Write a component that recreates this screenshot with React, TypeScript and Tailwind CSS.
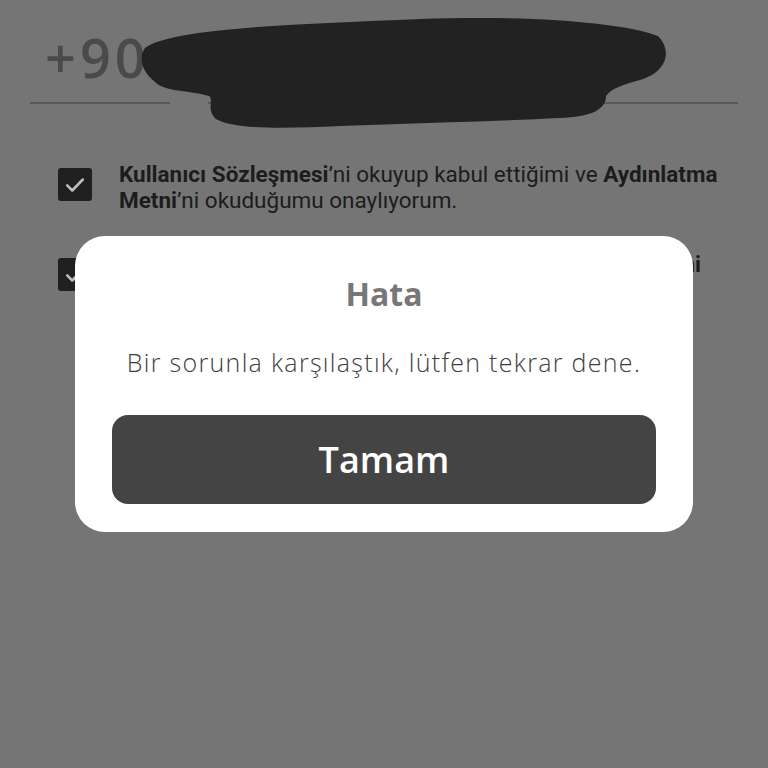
import React from 'react'

function Checkbox() {
  return (
    <div className="w-[34px] h-[33px] shrink-0 rounded-[3px] bg-[#202020] flex items-center justify-center">
      <svg width="22" height="22" viewBox="0 0 24 24" fill="none">
        <path d="M3.5 12.5l5.5 5.5L20.5 6" stroke="#bdbdbd" strokeWidth="2.8" strokeLinecap="round" strokeLinejoin="round" />
      </svg>
    </div>
  )
}

export default function App() {
  return (
    <div className="relative w-[768px] h-[768px] overflow-hidden bg-[#757575] font-['Roboto',sans-serif]">
      {/* Telefon alanı */}
      <div className="relative pt-[26px] px-[30px]">
        <div className="flex items-end gap-[38px]">
          <div className="w-[140px]">
            <div className="pl-[15px] text-[54px] leading-[62px] font-semibold tracking-[4px] text-[#4a4a4a] font-['Open_Sans',sans-serif]">+90</div>
            <div className="mt-[14px] h-[2px] bg-[#595959]" />
          </div>
          <div className="flex-1">
            <div className="h-[2px] bg-[#595959]" />
          </div>
        </div>
        {/* Karalanmış numara */}
        <svg className="absolute left-0 top-0" width="768" height="140" viewBox="0 0 768 140">
          <path
            d="M145,48 C170,28 300,24 420,19 C525,15 622,22 658,36 C672,50 668,72 640,80 C622,85 612,88 606,96 C606,110 590,117 560,118 C500,121 420,123 340,126 C280,129 232,129 216,119 C206,110 214,99 209,96 C188,90 165,92 155,82 C142,72 138,58 145,48 Z"
            fill="#222222"
          />
        </svg>
      </div>

      {/* Onaylar */}
      <div className="mt-[57px] pl-[58px] flex flex-col gap-[38px]">
        <div className="flex items-start gap-[27px]">
          <div className="pt-[7px]"><Checkbox /></div>
          <p className="w-[620px] text-[22.5px] leading-[26px] text-[#1c1c1c]">
            <b className="font-bold">Kullanıcı Sözleşmesi</b>’ni okuyup kabul ettiğimi ve <b className="font-bold">Aydınlatma</b>
            <br />
            <b className="font-bold">Metni</b>’ni okuduğumu onaylıyorum.
          </p>
        </div>
        <div className="flex items-start gap-[27px]">
          <div className="pt-[7px]"><Checkbox /></div>
          <p className="w-[582px] text-[22.5px] leading-[26px] text-[#1c1c1c]">
            <span className="block [text-align-last:justify]">
              Kampanyalardan haberdar olmak için <b className="font-bold">Açık Rıza Metni</b>
            </span>
            <span className="block">kapsamında ticari ileti almayı kabul ediyorum.</span>
          </p>
        </div>
      </div>

      {/* Hata penceresi */}
      <div className="absolute inset-0 flex items-center justify-center font-['Open_Sans',sans-serif]">
        <div className="w-[618px] h-[296px] bg-white rounded-[30px] flex flex-col items-center pt-[38px] px-[37px]">
          <h2 className="text-[32px] leading-[40px] font-bold text-[#777777]">Hata</h2>
          <p className="mt-[32px] text-[25px] leading-[32px] font-light tracking-[1.3px] text-[#3e3e3e]">
            Bir sorunla karşılaştık, lütfen tekrar dene.
          </p>
          <button className="mt-[37px] w-full h-[89px] rounded-[16px] bg-[#444444] text-white text-[36px] font-semibold">
            Tamam
          </button>
        </div>
      </div>
    </div>
  )
}
